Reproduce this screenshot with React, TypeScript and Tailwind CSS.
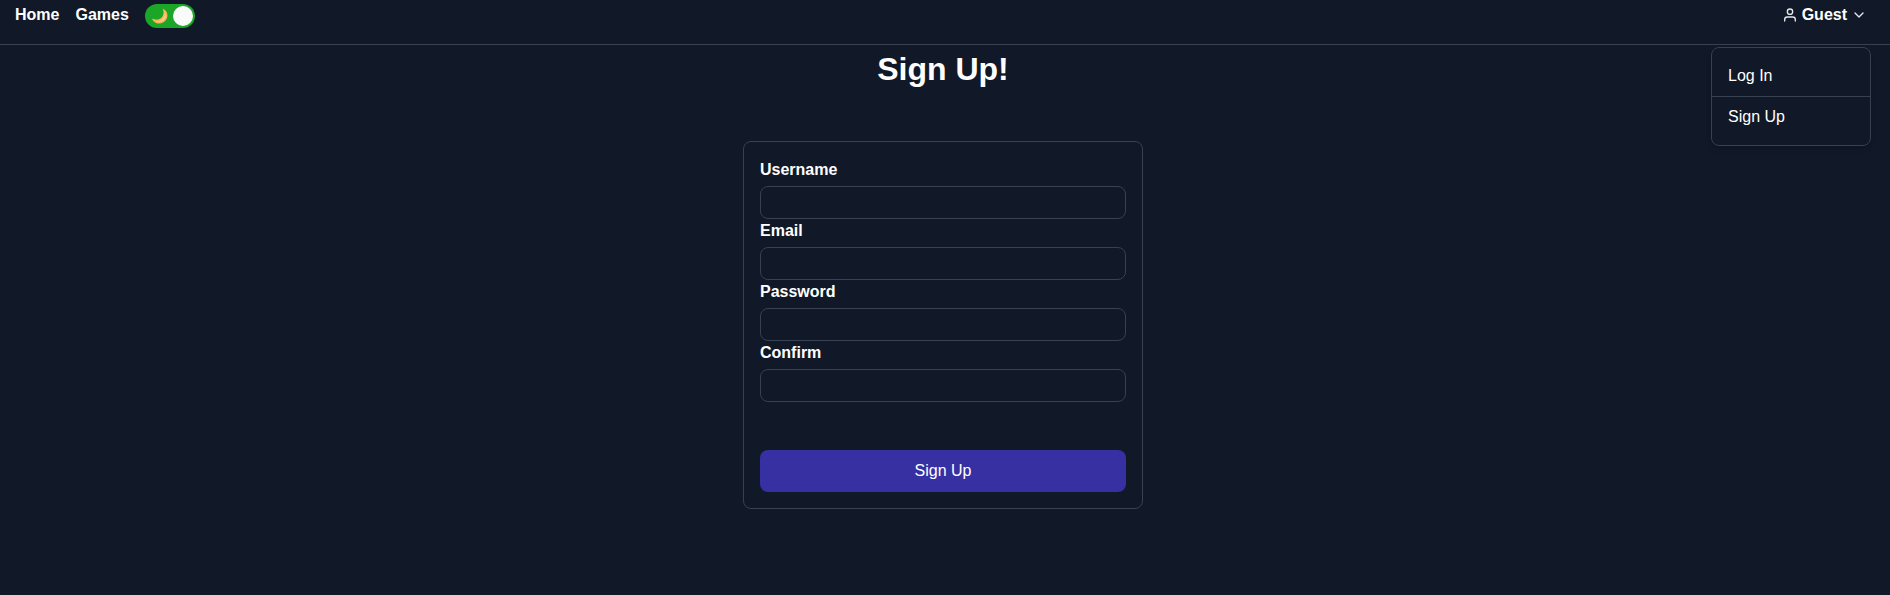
import { ChevronDown } from "lucide-react";
import { FiUser } from "react-icons/fi";

const fields = [
  { id: "username", label: "Username", type: "text" },
  { id: "email", label: "Email", type: "email" },
  { id: "password", label: "Password", type: "password" },
  { id: "confirm", label: "Confirm", type: "password" },
];

function ThemeToggle() {
  return (
    <button
      type="button"
      aria-label="Toggle theme"
      className="flex h-6 w-[50px] items-center justify-between rounded-full bg-[#1ba627] pr-0.5 pl-[7px]"
    >
      <svg width="16" height="16" viewBox="0 0 16 16" aria-hidden="true">
        <path
          d="M10.6 0.5C14.6 2 16.6 6.6 14.8 10.6C12.6 15.4 6.6 17 2.6 14.2C1.2 13.2 0.3 12 0.2 10.8C4.6 12.4 8.6 11.4 10.6 8.2C12 5.8 11.8 3 10.6 0.5Z"
          fill="#f7b455"
        />
        <path
          d="M12 2.2C14 4.6 14.4 7.6 13.2 10.2C11.4 13.6 7.4 14.8 3.6 13.2C7.6 13.4 10.6 12 12 9C13 6.8 13 4.4 12 2.2Z"
          fill="#ffd08a"
        />
      </svg>
      <span className="size-5 rounded-full bg-[#fafafa]" />
    </button>
  );
}

function UserMenu() {
  return (
    <div className="relative">
      <button type="button" className="flex h-6 items-center font-bold">
        <FiUser className="mr-1 size-4 text-[#e5e7eb]" />
        Guest
        <ChevronDown className="ml-1 size-4 text-[#e5e7eb]" />
      </button>
      <div className="absolute top-[44px] right-[-4px] w-40 rounded-lg border border-[#374151] bg-[#111827] shadow-md">
        <a href="#login" className="block border-b border-[#374151] px-4 pt-4 pb-2">
          Log In
        </a>
        <a href="#signup" className="block px-4 pt-2 pb-4">
          Sign Up
        </a>
      </div>
    </div>
  );
}

export default function App() {
  return (
    <div className="min-h-screen bg-[#111827] font-['Liberation_Sans',Arial,sans-serif] text-base text-white">
      <header className="flex h-[45px] items-start justify-between border-b border-[#374151] pr-[23px] pl-[15px]">
        <nav className="flex items-start gap-4 font-bold">
          <a href="#home" className="mt-[3px]">Home</a>
          <a href="#games" className="mt-[3px]">Games</a>
          <div className="mt-1">
            <ThemeToggle />
          </div>
        </nav>
        <div className="pt-[3px]">
          <UserMenu />
        </div>
      </header>
      <main className="flex flex-col items-center pr-1">
        <h1 className="mt-[4px] text-[32px] leading-[40px] font-bold">Sign Up!</h1>
        <form className="mt-[52px] w-[400px] rounded-lg border border-[#374151] p-4">
          {fields.map((field) => (
            <div key={field.id}>
              <label htmlFor={field.id} className="mb-1 block font-bold">
                {field.label}
              </label>
              <input
                id={field.id}
                type={field.type}
                className="block h-[33px] w-full rounded-lg border border-[#374151] bg-transparent px-2"
              />
            </div>
          ))}
          <button type="button" className="mt-12 block h-[42px] w-full rounded-lg bg-[#3730a3]">
            Sign Up
          </button>
        </form>
      </main>
    </div>
  );
}
